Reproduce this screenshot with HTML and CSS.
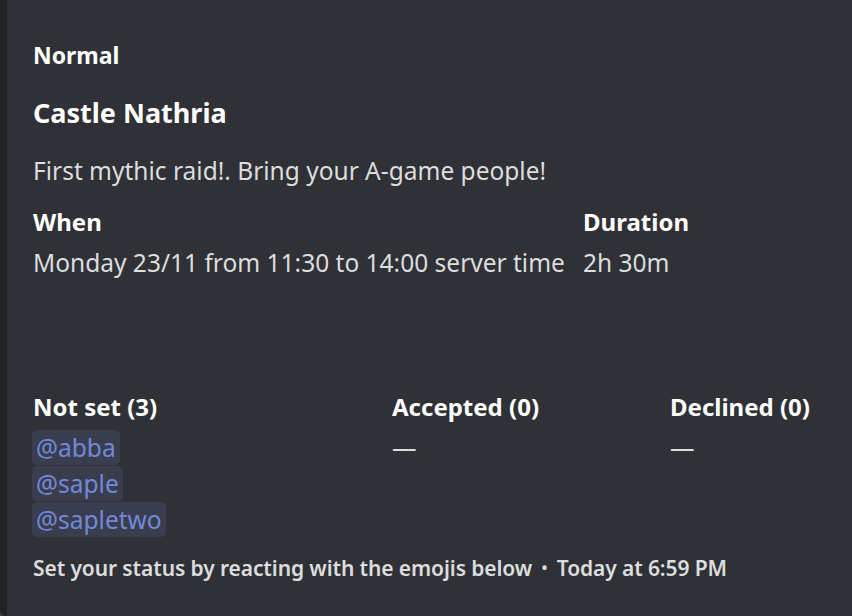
FILE: index.html
```html
<!DOCTYPE html>
<html>
<head>
<meta charset="utf-8">
<link rel="stylesheet" href="styles.css">
</head>
<body>
<div class="embed">
  <div class="stripe"></div>
  <div class="content">
    <div class="author">Normal</div>
    <div class="title">Castle Nathria</div>
    <div class="desc">First mythic raid!. Bring your A-game people!</div>
    <div class="row row-when">
      <div class="field f-when">
        <div class="fname">When</div>
        <div class="fvalue">Monday 23/11 from 11:30 to 14:00 server time</div>
      </div>
      <div class="field">
        <div class="fname">Duration</div>
        <div class="fvalue">2h 30m</div>
      </div>
    </div>
    <div class="spacer"></div>
    <div class="row row-status">
      <div class="field f-notset">
        <div class="fname">Not set (3)</div>
        <div class="fvalue mentions">
          <span class="mention">@abba</span>
          <span class="mention">@saple</span>
          <span class="mention">@sapletwo</span>
        </div>
      </div>
      <div class="field f-accepted">
        <div class="fname">Accepted (0)</div>
        <div class="fvalue">—</div>
      </div>
      <div class="field">
        <div class="fname">Declined (0)</div>
        <div class="fvalue">—</div>
      </div>
    </div>
    <div class="footer">Set your status by reacting with the emojis below <span class="dot">•</span> Today at 6:59 PM</div>
  </div>
</div>
</body>
</html>
```

FILE: styles.css
```css
html, body {
  margin: 0;
  padding: 0;
  background: #36393f;
  width: 852px;
  height: 616px;
  overflow: hidden;
}
.embed {
  display: flex;
  width: 852px;
  height: 616px;
  background: #2f3136;
  border-radius: 0 0 0 7px;
  overflow: hidden;
  font-family: "Noto Sans", "Open Sans", sans-serif;
}
.stripe {
  width: 7px;
  flex: 0 0 7px;
  background: #202225;
}
.content {
  flex: 1;
  padding: 37px 0 0 26px;
  display: flex;
  flex-direction: column;
}
.author {
  font-size: 23px;
  font-weight: 700;
  color: #ffffff;
  line-height: 36px;
}
.title {
  margin-top: 20px;
  font-size: 27px;
  font-weight: 700;
  color: #ffffff;
  line-height: 40px;
}
.desc {
  margin-top: 20px;
  font-size: 24.5px;
  color: #dcddde;
  line-height: 36px;
}
.row {
  display: flex;
}
.row-when {
  margin-top: 15px;
}
.field {
  display: flex;
  flex-direction: column;
}
.fname {
  font-size: 24px;
  font-weight: 700;
  color: #ffffff;
  line-height: 36px;
}
.fvalue {
  margin-top: 5px;
  font-size: 24.5px;
  color: #dcddde;
  line-height: 36px;
}
.f-when {
  width: 550px;
}
.spacer {
  height: 108px;
}
.f-notset {
  width: 359px;
}
.f-accepted {
  width: 278px;
}
.mentions {
  margin-top: 5px;
  display: flex;
  flex-direction: column;
  align-items: flex-start;
}
.mention {
  color: #7289da;
  background: rgba(114, 137, 218, 0.15);
  border-radius: 5px;
  padding: 0 4px;
  margin-left: -1px;
  line-height: 35px;
  margin-bottom: 1px;
}
.footer {
  margin-top: 15px;
  font-size: 21px;
  font-weight: 600;
  color: #dcddde;
  line-height: 30px;
  letter-spacing: -0.1px;
}
.dot {
  font-size: 16px;
  padding: 0 4px;
  vertical-align: 2px;
}
```
